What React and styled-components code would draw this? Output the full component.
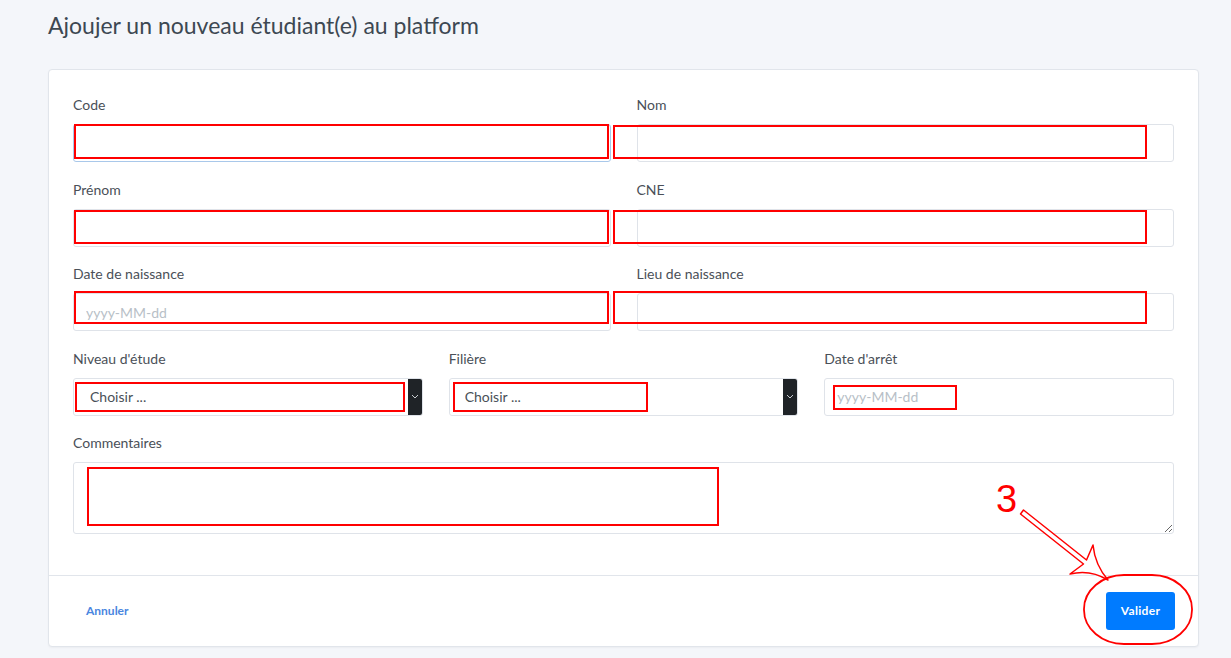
import styled, { createGlobalStyle } from 'styled-components';

const GlobalStyle = createGlobalStyle`
  body {
    margin: 0;
    background-color: #f4f6fa;
    font-family: Lato, 'Noto Sans', sans-serif;
    color: #495057;
  }
`;

const Page = styled.div`
  position: relative;
  width: 1231px;
  height: 658px;
  overflow: hidden;
  box-sizing: border-box;
  padding: 12px 32px 0 48px;
`;

const Heading = styled.h1`
  margin: 0 0 31px;
  font-size: 23px;
  line-height: 26px;
  font-weight: 400;
  color: #3d4852;
`;

const Card = styled.div`
  background-color: #fff;
  border: 1px solid #e1e5eb;
  border-radius: 4px;
  box-shadow: 0 1px 2px rgba(0, 0, 0, 0.04);
`;

const CardBody = styled.div`
  padding: 24px 24px 24px;
`;

const Row = styled.div`
  display: grid;
  grid-template-columns: repeat(${(p) => p.cols || 2}, 1fr);
  column-gap: 26px;
`;

const Group = styled.div`
  margin-bottom: 16.5px;
`;

const Label = styled.label`
  display: block;
  font-size: 14px;
  line-height: 21px;
  margin: 0 0 9px;
  color: #4a5058;
`;

const Input = styled.input`
  display: block;
  box-sizing: border-box;
  width: 100%;
  height: 38px;
  padding: 0 12px;
  font-family: inherit;
  font-size: 14px;
  color: #495057;
  background: #fff;
  border: 1px solid ${(p) => (p.$focus ? '#a9c8ea' : '#dfe3e9')};
  border-radius: 3px;
  outline: none;

  &::placeholder {
    color: #b8bfc7;
  }
`;

const SelectBox = styled.div`
  display: flex;
  height: 38px;
  box-sizing: border-box;
  border: 1px solid #dfe3e9;
  border-radius: 3px;
  background: #fff;
  overflow: hidden;
`;

const Select = styled.select`
  flex: 1;
  appearance: none;
  border: none;
  outline: none;
  background: transparent;
  padding: 0 0 0 ${(p) => p.$indent || 16}px;
  font-family: inherit;
  font-size: 14px;
  color: #495057;
`;

const SelectArrow = styled.span`
  width: 14px;
  background: #1f2327;
  display: flex;
  align-items: center;
  justify-content: center;
`;

const TextArea = styled.textarea`
  display: block;
  box-sizing: border-box;
  width: 100%;
  height: 72px;
  padding: 8px 12px;
  font-family: inherit;
  font-size: 14px;
  border: 1px solid #dfe3e9;
  border-radius: 3px;
  outline: none;
`;

const CardFooter = styled.div`
  display: flex;
  justify-content: space-between;
  align-items: center;
  padding: 16px 23px 16px 24px;
  border-top: 1px solid #e1e5eb;
`;

const LinkButton = styled.button`
  border: none;
  background: none;
  padding: 0 13px;
  font-family: inherit;
  font-size: 12px;
  font-weight: 700;
  color: #4a86e0;
  cursor: pointer;
`;

const PrimaryButton = styled.button`
  height: 38px;
  width: 69px;
  border: none;
  border-radius: 3px;
  background: #007bff;
  color: #fff;
  font-family: inherit;
  font-size: 12px;
  font-weight: 700;
  letter-spacing: 0.3px;
  cursor: pointer;
`;

const Overlay = styled.svg`
  position: absolute;
  left: 0;
  top: 0;
  pointer-events: none;
`;

function Chevron() {
  return (
    <svg width="8" height="5" viewBox="0 0 8 5">
      <path d="M1 1l3 3 3-3" fill="none" stroke="#c8ccd0" strokeWidth="1" />
    </svg>
  );
}

function Field({ label, placeholder, focus }) {
  return (
    <Group>
      <Label>{label}</Label>
      <Input placeholder={placeholder} $focus={focus} />
    </Group>
  );
}

function SelectField({ label, indent }) {
  return (
    <Group>
      <Label>{label}</Label>
      <SelectBox>
        <Select $indent={indent} defaultValue="">
          <option value="">Choisir ...</option>
        </Select>
        <SelectArrow>
          <Chevron />
        </SelectArrow>
      </SelectBox>
    </Group>
  );
}

const boxes = [
  [75, 125, 533, 33],
  [614, 126, 532, 32],
  [75, 211, 533, 32],
  [614, 211, 532, 32],
  [75, 292, 533, 31],
  [614, 292, 532, 31],
  [76, 383, 328, 28],
  [454, 383, 193, 28],
  [834, 386, 122, 23],
  [88, 468, 630, 57],
];

function Annotations() {
  return (
    <Overlay width="1231" height="658" viewBox="0 0 1231 658">
      {boxes.map(([x, y, w, h], i) => (
        <rect key={i} x={x} y={y} width={w} height={h} fill="none" stroke="#ff0000" strokeWidth="2" />
      ))}
      <text x="996" y="512" fill="#ff0000" fontSize="38" fontFamily="'Liberation Sans', sans-serif">
        3
      </text>
      <path
        d="M1023.5 510 L1086.5 560 L1093 545 Q1095 565 1108 580 Q1090 569 1070 574 L1083.5 564 L1020.5 514 Z"
        fill="#fff"
        stroke="#ff0000"
        strokeWidth="1.5"
        strokeLinejoin="round"
      />
      <rect x="1084" y="575" width="108" height="69" rx="40" ry="34" fill="none" stroke="#ff0000" strokeWidth="1.8" />
    </Overlay>
  );
}

export default function App() {
  return (
    <Page>
      <GlobalStyle />
      <Heading>Ajoujer un nouveau étudiant(e) au platform</Heading>
      <Card>
        <CardBody>
          <Row>
            <Field label="Code" focus />
            <Field label="Nom" />
          </Row>
          <Row>
            <Field label="Prénom" />
            <Field label="CNE" />
          </Row>
          <Row>
            <Field label="Date de naissance" placeholder="yyyy-MM-dd" />
            <Field label="Lieu de naissance" />
          </Row>
          <Row cols={3}>
            <SelectField label="Niveau d'étude" indent={16} />
            <SelectField label="Filière" indent={15} />
            <Field label="Date d'arrêt" placeholder="yyyy-MM-dd" />
          </Row>
          <Group>
            <Label>Commentaires</Label>
            <TextArea />
          </Group>
        </CardBody>
        <CardFooter>
          <LinkButton>Annuler</LinkButton>
          <PrimaryButton>Valider</PrimaryButton>
        </CardFooter>
      </Card>
      <Annotations />
    </Page>
  );
}
